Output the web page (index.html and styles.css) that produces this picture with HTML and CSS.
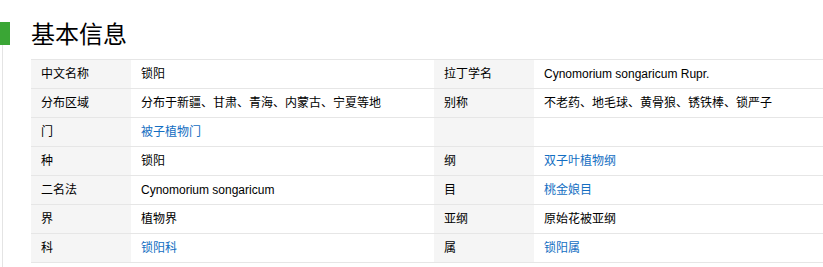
FILE: index.html
```html
<!DOCTYPE html>
<html lang="zh">
<head>
<meta charset="utf-8">
<title>基本信息</title>
<link rel="stylesheet" href="styles.css">
</head>
<body>
<div class="page">
  <div class="header">
    <span class="bar"></span>
    <h2 class="title">基本信息</h2>
  </div>
  <div class="body">
    <table class="info">
      <colgroup>
        <col class="c-label"><col class="c-value"><col class="c-label"><col class="c-value2">
      </colgroup>
      <tr><th>中文名称</th><td>锁阳</td><th>拉丁学名</th><td class="latin">Cynomorium songaricum Rupr.</td></tr>
      <tr><th>分布区域</th><td>分布于新疆、甘肃、青海、内蒙古、宁夏等地</td><th>别称</th><td>不老药、地毛球、黄骨狼、锈铁棒、锁严子</td></tr>
      <tr><th>门</th><td><a href="#">被子植物门</a></td><th></th><td></td></tr>
      <tr><th>种</th><td>锁阳</td><th>纲</th><td><a href="#">双子叶植物纲</a></td></tr>
      <tr><th>二名法</th><td class="latin">Cynomorium songaricum</td><th>目</th><td><a href="#">桃金娘目</a></td></tr>
      <tr><th>界</th><td>植物界</td><th>亚纲</th><td>原始花被亚纲</td></tr>
      <tr><th>科</th><td><a href="#">锁阳科</a></td><th>属</th><td><a href="#">锁阳属</a></td></tr>
    </table>
  </div>
</div>
</body>
</html>
```

FILE: styles.css
```css
html, body {
  margin: 0;
  padding: 0;
  background: #fff;
  overflow: hidden;
}
.page {
  width: 823px;
  height: 267px;
  overflow: hidden;
  font-family: "Liberation Sans", "Noto Sans CJK SC", sans-serif;
  color: #000;
}
.header {
  display: flex;
  align-items: flex-start;
  padding-top: 22px;
  height: 23px;
}
.bar {
  width: 10px;
  height: 23px;
  background: #3aa635;
  flex: none;
}
.title {
  margin: -4px 0 0 21px;
  font-family: "Noto Sans CJK SC", sans-serif;
  font-size: 24px;
  line-height: 30px;
  font-weight: normal;
  color: #000;
}
.body {
  margin-left: 2px;
  border-left: 1px solid #e4e4e4;
  padding: 14px 0 0 28px;
  height: 300px;
}
.info {
  border-collapse: collapse;
  width: 820px;
  table-layout: fixed;
  font-size: 12px;
  border-top: 1px solid #e6e6e6;
}
.c-label { width: 100px; }
.c-value { width: 303px; }
.info th, .info td {
  height: 28px;
  padding: 0 10px;
  border-bottom: 1px solid #e6e6e6;
  text-align: left;
  vertical-align: middle;
  white-space: nowrap;
  line-height: 16px;
}
.info th {
  background: #f5f5f5;
  font-weight: normal;
  color: #000;
}
.info td {
  background: #fff;
}
.info td.latin {
  font-family: "Liberation Sans", sans-serif;
  color: #000;
}
.info a {
  color: #136ec2;
  text-decoration: none;
}
```
